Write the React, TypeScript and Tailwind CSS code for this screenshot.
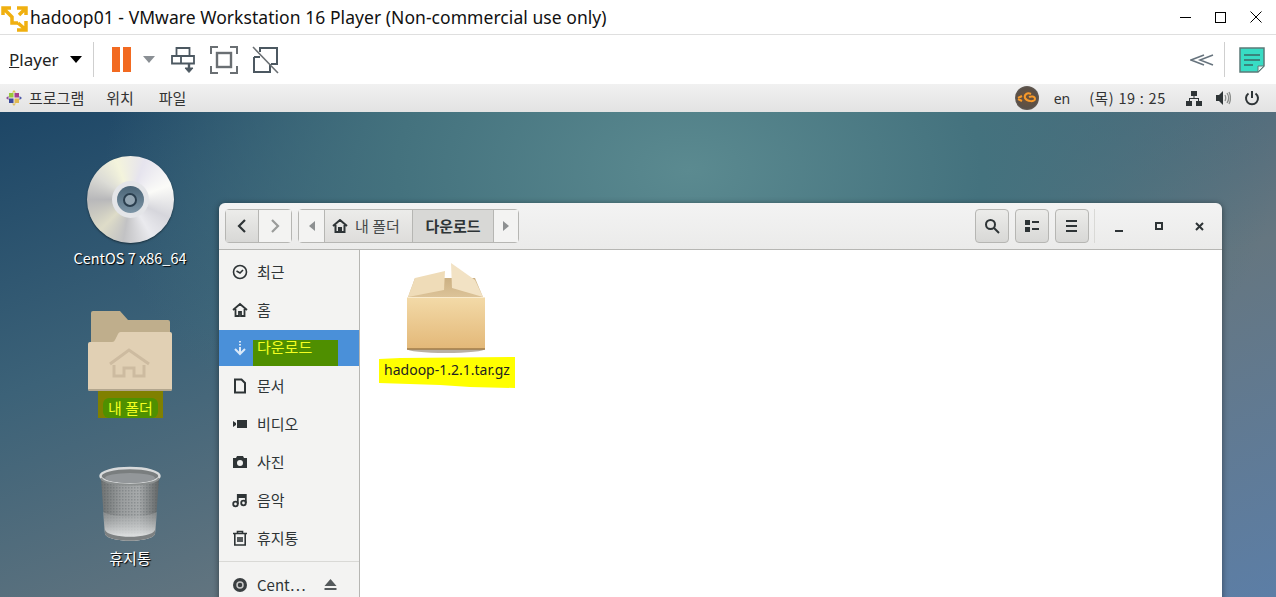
import { ReactNode } from "react";

const kr = "font-['Noto_Sans_CJK_KR','Noto_Sans',sans-serif]";

function VmwareLogo() {
  return (
    <svg width="30" height="32" viewBox="0 0 30 32" fill="none" stroke="#f0b010" strokeWidth="3.500" className="shrink-0">
      <path d="M3 14V7h8M4 8l8 8v6h6" />
      <path d="M17 7h9v7M25 8l-6 6" />
      <path d="M26 20v9h-9M25 28l-7-6" />
    </svg>
  );
}

function ToolbarIcons() {
  return (
    <div className="flex items-center">
      <div className="ml-[18px] flex h-[25px] gap-[3px]">
        <div className="w-[8px] bg-[#f26a21]" />
        <div className="w-[8px] bg-[#f26a21]" />
      </div>
      <svg width="12" height="7" viewBox="0 0 12 7" className="ml-[12px]"><path d="M0 0h12L6 7z" fill="#8a8f94" /></svg>
      <svg width="24" height="26" viewBox="0 0 24 26" fill="none" stroke="#4c5861" strokeWidth="1.800" className="ml-[16px]">
        <path d="M5.500 1h13v8h-13zM1 9h22v7.500H1zM10 9v7.500" />
        <path d="M18 17v7" strokeWidth="2.400" />
        <path d="M14 21l4 4.500 4-4.500z" fill="#4c5861" strokeWidth="1" />
      </svg>
      <svg width="28" height="28" viewBox="0 0 28 28" fill="none" stroke="#6a6f73" strokeWidth="2" className="ml-[15px]">
        <path d="M1 8V1h7M20 1h7v7M27 20v7h-7M8 27H1v-7" />
        <rect x="7" y="7" width="14" height="14" strokeWidth="2.400" />
      </svg>
      <svg width="27" height="28" viewBox="0 0 27 28" fill="none" stroke="#4c5861" strokeWidth="2" className="ml-[14px]">
        <path d="M8 6V2h17v16h-6M2 11h6M2 11v15h16v-8" />
        <path d="M1 1l25 26" strokeWidth="1.600" stroke="#6a6f73" />
      </svg>
    </div>
  );
}

function TopPanel() {
  return (
    <div className={`flex h-[28px] shrink-0 items-center bg-gradient-to-b from-[#f1f1f1] to-[#e3e3e3] text-[15px] text-[#333] ${kr}`}>
      <svg width="16" height="16" viewBox="0 0 16 16" className="ml-[6px]">
        <rect x="3" y="3" width="4.500" height="4.500" fill="#9ac83c" />
        <rect x="8.500" y="3" width="4.500" height="4.500" fill="#a6408e" />
        <rect x="3" y="8.500" width="4.500" height="4.500" fill="#3c4a9c" />
        <rect x="8.500" y="8.500" width="4.500" height="4.500" fill="#e0b850" />
        <path d="M8 0l2 2.500H6z" fill="#d8c850" />
        <path d="M16 8l-2.500 2v-4z" fill="#4a58a8" />
        <path d="M8 16l-2-2.500h4z" fill="#e0c060" />
        <path d="M0 8l2.500-2v4z" fill="#8a4a98" />
      </svg>
      <span className="ml-[7px]">프로그램</span>
      <span className="ml-[22px]">위치</span>
      <span className="ml-[25px]">파일</span>
      <div className="ml-auto flex items-center">
        <div className="flex h-[24px] w-[24px] items-center justify-center rounded-full bg-[radial-gradient(circle,#6e5238_0%,#5a5048_60%,#7c7c7c_100%)]">
          <svg width="20" height="14" viewBox="0 0 20 14" fill="none" stroke="#f89a2a" strokeWidth="2">
            <path d="M1 7l4-2M1 8l4 2M14 3c-4-2-7 1-6 4 2 4 10 4 10 1 0-3-4-3-6-2" />
          </svg>
        </div>
        <span className="ml-[15px] font-['Noto_Sans'] text-[14px]">en</span>
        <span className="ml-[19px] text-[14.500px] tracking-[0.7px]">(목) 19 : 25</span>
        <svg width="16" height="16" viewBox="0 0 16 16" fill="#2e3436" className="ml-[20px]">
          <path d="M5 1h6v5H5zM0 11h6v5H0zM10 11h6v5h-6zM7.500 6h1v2h4.500v3h-1V9H4v2H3V8h4.500z" />
        </svg>
        <svg width="16" height="16" viewBox="0 0 16 16" className="ml-[13px]">
          <path d="M1 5h3l4-4v14l-4-4H1z" fill="#2e3436" />
          <path d="M10 5c1 2 1 4 0 6M12 3c2 3 2 7 0 10M14 2c2 4 2 8 0 12" fill="none" stroke="#8d8f8d" strokeWidth="1.300" />
        </svg>
        <svg width="16" height="16" viewBox="0 0 16 16" fill="none" stroke="#2e3436" strokeWidth="2" className="ml-[13px] mr-[16px]">
          <path d="M8 1v7M4.500 3.500a6 6 0 1 0 7 0" />
        </svg>
      </div>
    </div>
  );
}

function DesktopItem({ children, label, mark, small }: { children: ReactNode; label: string; mark?: boolean; small?: boolean }) {
  return (
    <div className="flex w-[120px] flex-col items-center">
      {children}
      {mark ? (
        <div className="ml-[1px] mt-[-1px] flex h-[27px] w-[65px] items-end justify-center bg-[#808000]">
          <span className={`rounded-[6px] bg-[#4f9000] px-[5px] text-[15px] leading-[20px] text-[#f4ff20] ${kr}`}>{label}</span>
        </div>
      ) : (
        <span className={`mt-[5px] leading-[20px] text-white [text-shadow:1px_1px_1px_#000] ${small ? "text-[14.500px]" : "text-[15px]"} ${kr}`}>{label}</span>
      )}
    </div>
  );
}

function DiscIcon() {
  return (
    <div className="relative h-[87px] w-[87px] rounded-full bg-[conic-gradient(from_20deg,#e6e4ee,#fbfbf8_50deg,#d6d6dc_95deg,#eaeaee_130deg,#c2c2c4_170deg,#dedcc8_205deg,#b8b8ba_250deg,#dcdcd6_285deg,#f4f4dc_320deg,#e6e4ee)] shadow-[0_1px_2px_rgba(0,0,0,0.5)]">
      <div className="absolute left-[25px] top-[25px] flex h-[37px] w-[37px] items-center justify-center rounded-full bg-[#e4e5e8]">
        <div className="flex h-[27px] w-[27px] items-center justify-center rounded-full bg-gradient-to-b from-[#4a6476] to-[#7d95a6]">
          <div className="h-[14px] w-[14px] rounded-full border-[2px] border-[#2a3e4e] bg-[#93a5b2]" />
        </div>
      </div>
    </div>
  );
}

function FolderIcon() {
  return (
    <svg width="86" height="82" viewBox="0 0 86 82">
      <path d="M4 3a2 2 0 0 1 2-2h27l8 9h40a2 2 0 0 1 2 2v30H4z" fill="#bfae8c" />
      <path d="M1 34a2 2 0 0 1 2-2h22a3 3 0 0 0 3-2l3-6a3 3 0 0 1 3-2h49a2 2 0 0 1 2 2v55a2 2 0 0 1-2 2H3a2 2 0 0 1-2-2z" fill="#e1d0b4" />
      <path d="M1 79a2 2 0 0 0 2 2h80a2 2 0 0 0 2-2z" fill="#b3a68e" />
      <g fill="none" stroke="#cdbba0" strokeWidth="3">
        <path d="M23 54l19-14 20 14" />
        <path d="M27 55v11h10v-8h10v8h10V55" />
      </g>
    </svg>
  );
}

function TrashIcon() {
  return (
    <svg width="64" height="77" viewBox="0 0 64 77" className="mt-[6px]">
      <defs>
        <linearGradient id="trashBody" x1="0" x2="1" y1="0" y2="0">
          <stop offset="0" stopColor="#6e7272" />
          <stop offset="0.35" stopColor="#9a9d9e" />
          <stop offset="0.65" stopColor="#a8abac" />
          <stop offset="1" stopColor="#626667" />
        </linearGradient>
        <linearGradient id="trashBottom" x1="0" x2="0" y1="0" y2="1">
          <stop offset="0" stopColor="#a6a9aa" stopOpacity="0.4" />
          <stop offset="1" stopColor="#f0f2f2" />
        </linearGradient>
        <pattern id="trashMesh" width="3" height="3" patternUnits="userSpaceOnUse">
          <rect width="1.500" height="1.500" fill="#50555a" fillOpacity="0.3" />
        </pattern>
      </defs>
      <path d="M3 12l4 56c3 9 47 9 50 0l4-56z" fill="url(#trashBody)" />
      <path d="M3 12l4 56c3 9 47 9 50 0l4-56z" fill="url(#trashMesh)" />
      <path d="M5 46c12 6 42 6 54 0l-2 22c-3 9-47 9-50 0z" fill="url(#trashBottom)" />
      <path d="M7 64c3 9 47 9 50 0v4c-3 9-47 9-50 0z" fill="#7d8182" />
      <ellipse cx="32" cy="10" rx="29.500" ry="8" fill="#7a7e7f" stroke="#d8dadb" strokeWidth="2.500" />
      <path d="M3 12c3 9 55 9 58 0" fill="none" stroke="#8a8e8e" strokeWidth="2" />
      <ellipse cx="32" cy="12" rx="25" ry="5" fill="#93979a" />
    </svg>
  );
}

function NavIcon({ name }: { name: string }) {
  const common = { width: 16, height: 16, viewBox: "0 0 16 16" };
  if (name === "clock") {
    return (
      <svg {...common} fill="none" stroke="#2e3436" strokeWidth="1.600">
        <circle cx="8" cy="8" r="6.500" />
        <path d="M4.500 7l3.500 2 3-3" />
      </svg>
    );
  }
  if (name === "home") {
    return (
      <svg {...common} fill="none" stroke="#2e3436" strokeWidth="1.800">
        <path d="M1 8l7-6 7 6M3.500 7v7H7v-4h2v4h3.500V7" />
      </svg>
    );
  }
  if (name === "down") {
    return (
      <svg {...common} fill="none" stroke="#dbe9f8" strokeWidth="2">
        <path d="M8 1v1.500M8 4v1.500M8 7v6M3 9l5 5 5-5" />
      </svg>
    );
  }
  if (name === "doc") {
    return (
      <svg {...common} fill="none" stroke="#2e3436" strokeWidth="2">
        <path d="M3 1.500h6.500L13 5v9.500H3z" />
      </svg>
    );
  }
  if (name === "video") {
    return (
      <svg {...common} fill="#2e3436">
        <path d="M1 5l3 2v2l-3 2zM5 4h10v8H5z" />
      </svg>
    );
  }
  if (name === "photo") {
    return (
      <svg {...common} fill="#2e3436">
        <path fillRule="evenodd" d="M1 4h3l1-2h6l1 2h3v10H1zM8 6a3 3 0 1 0 0 6 3 3 0 0 0 0-6z" />
      </svg>
    );
  }
  if (name === "music") {
    return (
      <svg {...common} fill="none" stroke="#2e3436" strokeWidth="1.800">
        <circle cx="3.500" cy="12" r="2.300" />
        <circle cx="11.500" cy="11" r="2.300" />
        <path d="M5.800 12V3h8v8M5.800 5h8" />
      </svg>
    );
  }
  if (name === "trash") {
    return (
      <svg {...common} fill="none" stroke="#2e3436" strokeWidth="1.600">
        <path d="M1 3.500h14M5.500 3V1.500h5V3M2.800 4v11h10.400V4M6 7v5M8 7v5M10 7v5" />
      </svg>
    );
  }
  return (
    <svg {...common}>
      <circle cx="8" cy="8" r="7" fill="#3a3f41" />
      <circle cx="8" cy="8" r="3" fill="none" stroke="#c9c9c9" strokeWidth="1.500" />
    </svg>
  );
}

function SideItem({ icon, label }: { icon: string; label: string }) {
  return (
    <div className="flex h-[38px] items-center pl-[13px]">
      <NavIcon name={icon} />
      <span className="ml-[9px] text-[15px] text-[#2e3436]">{label}</span>
    </div>
  );
}

function Sidebar() {
  return (
    <div className={`flex w-[141px] shrink-0 flex-col border-r border-[#b6b6b3] bg-[#f3f3f2] pt-[3px] ${kr}`}>
      <SideItem icon="clock" label="최근" />
      <SideItem icon="home" label="홈" />
      <div className="mb-[1px] mt-[1px] flex h-[36px] items-center bg-[#4a90d9] pl-[13px]">
        <NavIcon name="down" />
        <div className="ml-[5px] mt-[10px] h-[26px] w-[85px] bg-[#4f8f00] pl-[4px]">
          <span className="mt-[-3px] block text-[15px] leading-[20px] text-[#f4ff20]">다운로드</span>
        </div>
      </div>
      <SideItem icon="doc" label="문서" />
      <SideItem icon="video" label="비디오" />
      <SideItem icon="photo" label="사진" />
      <SideItem icon="music" label="음악" />
      <SideItem icon="trash" label="휴지통" />
      <div className="mt-[4px] border-t border-[#d9d9d6]" />
      <div className="flex h-[46px] items-center pl-[13px]">
        <NavIcon name="disc" />
        <span className="ml-[9px] text-[15px] text-[#2e3436]">Cent<span className="tracking-[-3px]">⋯</span></span>
        <svg width="13" height="12" viewBox="0 0 13 12" fill="#555a5c" className="ml-auto mr-[22px]">
          <path d="M6.500 0l6 7H.5zM.5 9h12v2H.5z" />
        </svg>
      </div>
    </div>
  );
}

function HeaderBtn({ children }: { children: ReactNode }) {
  return (
    <div className="flex h-[34px] w-[34px] items-center justify-center rounded-[4px] border border-[#b6b6b3] bg-gradient-to-b from-[#ececea] to-[#d8d8d6]">
      {children}
    </div>
  );
}

function WindowHeader() {
  return (
    <div className={`flex h-[47px] shrink-0 items-center rounded-t-[6px] border-b border-[#b6b6b3] bg-gradient-to-b from-[#f3f3f3] to-[#ebebea] pl-[6px] ${kr}`}>
      <div className="flex h-[34px] w-[67px] rounded-[4px] border border-[#b6b6b3]">
        <div className="flex w-[33px] items-center justify-center border-r border-[#b6b6b3] bg-gradient-to-b from-[#ececea] to-[#d8d8d6]">
          <svg width="10" height="14" viewBox="0 0 10 14" fill="none" stroke="#2e3436" strokeWidth="2.200"><path d="M8 1L2 7l6 6" /></svg>
        </div>
        <div className="flex flex-1 items-center justify-center bg-[#f3f3f2]">
          <svg width="10" height="14" viewBox="0 0 10 14" fill="none" stroke="#9a9c9a" strokeWidth="2.200"><path d="M2 1l6 6-6 6" /></svg>
        </div>
      </div>
      <div className="ml-[6px] flex h-[34px] w-[221px] rounded-[4px] border border-[#b6b6b3] text-[15px]">
        <div className="flex w-[25px] items-center justify-center bg-[#f3f3f2]">
          <svg width="6" height="10" viewBox="0 0 6 10" fill="#8d9091"><path d="M6 0v10L0 5z" /></svg>
        </div>
        <div className="flex w-[89px] items-center justify-center border-x border-[#b6b6b3] bg-gradient-to-b from-[#ececea] to-[#dedddb] pr-[5px] text-[#45494a]">
          <svg width="16" height="14" viewBox="0 0 16 14" fill="none" stroke="#2e3436" strokeWidth="2" className="mr-[7px]">
            <path d="M1 7l7-6 7 6M3.500 6v7H7V9h2v4h3.500V6" />
          </svg>
          내 폴더
        </div>
        <div className="flex w-[81px] items-center justify-center border-r border-[#b6b6b3] bg-[#d8d8d6] font-bold text-[#2e3436]">다운로드</div>
        <div className="flex flex-1 items-center justify-center bg-[#f3f3f2]">
          <svg width="6" height="10" viewBox="0 0 6 10" fill="#8d9091"><path d="M0 0v10l6-5z" /></svg>
        </div>
      </div>
      <div className="ml-auto flex items-center gap-[6px]">
        <HeaderBtn>
          <svg width="16" height="16" viewBox="0 0 16 16" fill="none" stroke="#2e3436" strokeWidth="2"><circle cx="6.500" cy="6.500" r="4.500" /><path d="M10 10l5 5" /></svg>
        </HeaderBtn>
        <HeaderBtn>
          <svg width="14" height="12" viewBox="0 0 14 12" fill="#2e3436"><path d="M0 0h5v5H0zM0 7h5v5H0zM7 1h7v2H7zM7 8h7v2H7z" /></svg>
        </HeaderBtn>
        <HeaderBtn>
          <svg width="12" height="12" viewBox="0 0 12 12" fill="#2e3436"><path d="M0 0h11v2H0zM0 5h11v2H0zM0 10h11v2H0z" /></svg>
        </HeaderBtn>
      </div>
      <div className="ml-[5px] h-[34px] w-px bg-[#d9d9d6]" />
      <div className="flex w-[127px] items-center">
        <div className="ml-[20px] mt-[9px] h-[2px] w-[8px] bg-[#2e3436]" />
        <div className="ml-[32px] h-[8px] w-[8px] border-[2px] border-[#2e3436]" />
        <svg width="9" height="9" viewBox="0 0 9 9" stroke="#2e3436" strokeWidth="2" className="ml-[32px]"><path d="M1 1l7 7M8 1L1 8" /></svg>
      </div>
    </div>
  );
}

function BoxIcon() {
  return (
    <svg width="80" height="92" viewBox="0 0 80 92" className="ml-[28px] self-start">
      <defs>
        <linearGradient id="boxFront" x1="0" x2="0" y1="0" y2="1">
          <stop offset="0" stopColor="#f3daa8" />
          <stop offset="1" stopColor="#e3b878" />
        </linearGradient>
        <linearGradient id="boxInner" x1="0" x2="0" y1="0" y2="1">
          <stop offset="0" stopColor="#cbb083" />
          <stop offset="1" stopColor="#dcc398" />
        </linearGradient>
      </defs>
      <ellipse cx="39" cy="87" rx="39" ry="4" fill="#b8b0a4" />
      <path d="M8 16h60l8 19H1z" fill="url(#boxInner)" />
      <path d="M1 35L8 16l30-7-1 19z" fill="#efdcb8" />
      <path d="M44 1l24 17 8 17-31-9z" fill="#f2e2c4" />
      <rect x="0" y="35" width="78" height="52" fill="url(#boxFront)" />
      <path d="M0 35.500h78" stroke="#f9ebce" strokeWidth="1" />
      <path d="M0 87h78" stroke="#a07c4a" strokeWidth="1.500" />
    </svg>
  );
}

function FileArea() {
  return (
    <div className="flex-1 bg-white pl-[19px] pt-[12px]">
      <div className="flex w-[136px] flex-col items-center">
        <BoxIcon />
        <div className="relative mt-[3px] h-[31px] w-[136px] pt-[2px] text-center font-['Noto_Sans'] text-[14px] leading-[21px] text-[#222]">
          <svg width="136" height="31" viewBox="0 0 136 31" className="absolute left-0 top-0">
            <path d="M0 2l21-1L136 0v31l-45-1-30-2-61-2z" fill="#ffff00" />
          </svg>
          <span className="relative">hadoop-1.2.1.tar.gz</span>
        </div>
      </div>
    </div>
  );
}

function FilesWindow() {
  return (
    <div className="absolute left-[219px] top-[91px] flex h-[500px] w-[1003px] flex-col rounded-t-[6px] shadow-[0_1px_6px_rgba(0,0,0,0.45)]">
      <WindowHeader />
      <div className="flex flex-1 overflow-hidden">
        <Sidebar />
        <FileArea />
      </div>
    </div>
  );
}

export default function App() {
  return (
    <div className="flex h-[597px] w-[1276px] flex-col overflow-hidden bg-white font-['Noto_Sans',sans-serif]">
      <div className="flex h-[35px] shrink-0 items-center border-b border-[#dfdfdf]">
        <VmwareLogo />
        <span className="text-[17.500px] tracking-[0.05px] text-[#111]">hadoop01 - VMware Workstation 16 Player (Non-commercial use only)</span>
        <div className="ml-auto flex items-center">
          <div className="h-px w-[11px] bg-black" />
          <div className="ml-[24px] h-[11px] w-[11px] border border-black" />
          <svg width="12" height="12" viewBox="0 0 12 12" stroke="#000" className="ml-[24px] mr-[14px]"><path d="M0.500 0.500l11 11M11.500 0.500l-11 11" /></svg>
        </div>
      </div>
      <div className="flex h-[49px] shrink-0 items-center">
        <span className="ml-[9px] text-[17px] text-[#222]"><span className="underline">P</span>layer</span>
        <svg width="12" height="7" viewBox="0 0 12 7" className="ml-[11px]"><path d="M0 0h12L6 7z" fill="#000" /></svg>
        <div className="ml-[11px] h-[35px] w-px bg-[#cfcfcf]" />
        <ToolbarIcons />
        <div className="ml-auto flex items-center">
          <svg width="24" height="12" viewBox="0 0 24 12" fill="none" stroke="#66737d" strokeWidth="1.500"><path d="M14 1L1 6l13 5M23 1L10 6l13 5" /></svg>
          <div className="ml-[10px] h-[35px] w-px bg-[#cfcfcf]" />
          <svg width="26" height="26" viewBox="0 0 26 26" className="ml-[14px] mr-[11px]">
            <path d="M1 1h24v18l-6 6H1z" fill="#38dcc4" stroke="#5c7a78" strokeWidth="1.500" />
            <path d="M19 25v-6h6z" fill="#e4f6f2" stroke="#5c7a78" />
            <path d="M5 8h16M5 13h16M5 18h9" stroke="#3a6a66" strokeWidth="1.500" />
          </svg>
        </div>
      </div>
      <TopPanel />
      <div className="relative flex-1 bg-[radial-gradient(ellipse_at_54%_12%,#5b8a90_0%,#44727e_30%,rgba(68,116,127,0)_60%),linear-gradient(160deg,#1d4666_0%,#3c6278_30%,#657680_62%,#5c7ea6_100%)]">
        <div className="flex w-[190px] flex-col items-center gap-[42px] pl-[70px] pt-[44px]">
          <DesktopItem label="CentOS 7 x86_64" small><DiscIcon /></DesktopItem>
          <DesktopItem label="내 폴더" mark><FolderIcon /></DesktopItem>
          <DesktopItem label="휴지통"><TrashIcon /></DesktopItem>
        </div>
        <FilesWindow />
      </div>
    </div>
  );
}
